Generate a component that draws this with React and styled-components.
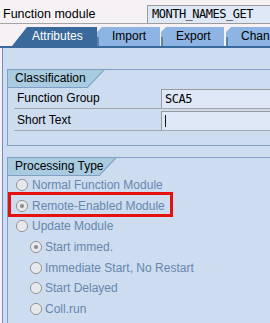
import React from 'react';
import styled, { createGlobalStyle } from 'styled-components';

const Global = createGlobalStyle`
  html, body {
    margin: 0;
    padding: 0;
    background: #f5f1f5;
    overflow: hidden;
  }
  body {
    font-family: "Liberation Sans", Arial, sans-serif;
    font-size: 12px;
    color: #000;
  }
`;

const Page = styled.div`
  width: 270px;
  height: 323px;
  overflow: hidden;
  display: flex;
  flex-direction: column;
`;

const TopBar = styled.div`
  display: flex;
  height: 24px;
  flex-shrink: 0;
`;

const TopLabel = styled.div`
  width: 147px;
  height: 24px;
  box-sizing: border-box;
  padding: 7px 0 0 3px;
  line-height: 15px;
  font-size: 12.5px;
  border-bottom: 1px solid #a5a5a5;
  white-space: nowrap;
  flex-shrink: 0;
`;

const MonoField = styled.div`
  flex: 1;
  min-width: 160px;
  height: 19px;
  margin-top: 5px;
  box-sizing: border-box;
  border: 1px solid #9b9b9b;
  border-right: none;
  background: #dfe8f6;
  padding-left: ${({ $pad }) => $pad || 3}px;
  font-family: "DejaVu Sans Mono", "Liberation Mono", monospace;
  font-size: 12px;
  letter-spacing: -0.5px;
  line-height: 17px;
  white-space: nowrap;
  display: flex;
  align-items: center;
`;

const TabStrip = styled.div`
  display: flex;
  align-items: flex-end;
  height: 22px;
  padding-left: 12px;
  flex-shrink: 0;
  overflow: hidden;
`;

const ActiveTab = styled.div`
  width: 85px;
  height: 19px;
  box-sizing: border-box;
  padding-left: 20px;
  line-height: 19px;
  background: #3a6a9c;
  color: #fff;
  clip-path: polygon(15px 0, 100% 0, 100% 100%, 0 100%);
  flex-shrink: 0;
`;

const Tab = styled.div`
  position: relative;
  width: ${({ $w }) => $w}px;
  height: 19px;
  margin-left: ${({ $gap }) => $gap}px;
  box-sizing: border-box;
  padding-left: 15px;
  line-height: 19px;
  background: #8db4e2;
  clip-path: polygon(5px 0, 100% 0, 100% 100%, 0 100%, 0 5px);
  flex-shrink: 0;
  white-space: nowrap;
  &::before {
    content: '';
    position: absolute;
    left: 0;
    bottom: 0;
    width: 2px;
    height: 9px;
    background: #5b82ad;
  }
`;

const TabLine = styled.div`
  height: 2px;
  background: #3a6a9c;
  flex-shrink: 0;
`;

const Panel = styled.div`
  flex: 1;
  margin-left: 2px;
  border-left: 1px solid #6b8fbf;
  background: #cddcef;
  padding: 21px 0 0 4px;
`;

const Group = styled.div`
  width: 320px;
  border: 1px solid #7f9fc4;
  padding-bottom: ${({ $pb }) => $pb}px;
  margin-bottom: 11px;
`;

const HeaderOuter = styled.div`
  display: inline-block;
  background: #7f9fc4;
  padding-bottom: 1px;
  clip-path: polygon(0 0, 100% 0, calc(100% - 17px) 100%, 0 100%);
`;

const HeaderInner = styled.div`
  height: 17px;
  line-height: 17px;
  padding: 0 ${({ $pr }) => $pr}px 0 7px;
  background: #a8cbe0;
  clip-path: polygon(0 0, calc(100% - 1.5px) 0, calc(100% - 17.5px) 100%, 0 100%);
  white-space: nowrap;
`;

const FieldRow = styled.div`
  display: flex;
  height: 20px;
  margin-left: 6px;
  margin-top: ${({ $mt }) => $mt || 0}px;
  border-bottom: 1px solid #a3a7ab;
`;

const FieldLabel = styled.div`
  width: 147px;
  padding-left: 3px;
  box-sizing: border-box;
  line-height: 20px;
  flex-shrink: 0;
`;

const FieldInput = styled(MonoField)`
  margin-top: 1px;
  height: 19px;
  border-bottom: none;
  background: #dde7f6;
`;

const Cursor = styled.span`
  display: inline-block;
  width: 1px;
  height: 12px;
  background: #111;
`;

const RadioList = styled.div`
  margin-top: -1px;
  padding-left: 8px;
`;

const RadioRow = styled.div`
  position: relative;
  display: flex;
  align-items: center;
  gap: ${({ $sub }) => ($sub ? 3 : 4)}px;
  height: 20.6px;
  padding-left: ${({ $sub }) => ($sub ? 14 : 0)}px;
  color: #6787b0;
  white-space: nowrap;
`;

const Radio = styled.span`
  position: relative;
  width: 12px;
  height: 12px;
  box-sizing: border-box;
  border-radius: 50%;
  border: 1px solid #8d8d8d;
  background: radial-gradient(circle, #e6e8ec 55%, #fbfbfb 70%);
  flex-shrink: 0;
  &::after {
    content: '';
    display: ${({ $on }) => ($on ? 'block' : 'none')};
    position: absolute;
    left: 3px;
    top: 3px;
    width: 4px;
    height: 4px;
    border-radius: 50%;
    background: #8a8a8a;
  }
`;

const Highlight = styled.div`
  position: absolute;
  left: -8px;
  top: -4px;
  width: 165px;
  height: 25px;
  box-sizing: border-box;
  border: 3px solid #e51010;
  pointer-events: none;
`;

const radios = [
  { label: 'Normal Function Module' },
  { label: 'Remote-Enabled Module', on: true, mark: true },
  { label: 'Update Module' },
  { label: 'Start immed.', on: true, sub: true },
  { label: 'Immediate Start, No Restart', sub: true },
  { label: 'Start Delayed', sub: true },
  { label: 'Coll.run', sub: true },
];

export default function App() {
  return (
    <Page>
      <Global />
      <TopBar>
        <TopLabel>Function module</TopLabel>
        <MonoField $pad={4}>MONTH_NAMES_GET</MonoField>
      </TopBar>
      <TabStrip>
        <ActiveTab>Attributes</ActiveTab>
        <Tab $w={63} $gap={0}>Import</Tab>
        <Tab $w={63} $gap={1}>Export</Tab>
        <Tab $w={80} $gap={2}>Changing</Tab>
      </TabStrip>
      <TabLine />
      <Panel>
        <Group $pb={14}>
          <HeaderOuter>
            <HeaderInner $pr={19}>Classification</HeaderInner>
          </HeaderOuter>
          <FieldRow>
            <FieldLabel>Function Group</FieldLabel>
            <FieldInput>SCA5</FieldInput>
          </FieldRow>
          <FieldRow $mt={1}>
            <FieldLabel>Short Text</FieldLabel>
            <FieldInput>
              <Cursor />
            </FieldInput>
          </FieldRow>
        </Group>
        <Group $pb={40}>
          <HeaderOuter>
            <HeaderInner $pr={13}>Processing Type</HeaderInner>
          </HeaderOuter>
          <RadioList>
            {radios.map((r) => (
              <RadioRow key={r.label} $sub={r.sub}>
                {r.mark && <Highlight />}
                <Radio $on={r.on} />
                {r.label}
              </RadioRow>
            ))}
          </RadioList>
        </Group>
      </Panel>
    </Page>
  );
}
